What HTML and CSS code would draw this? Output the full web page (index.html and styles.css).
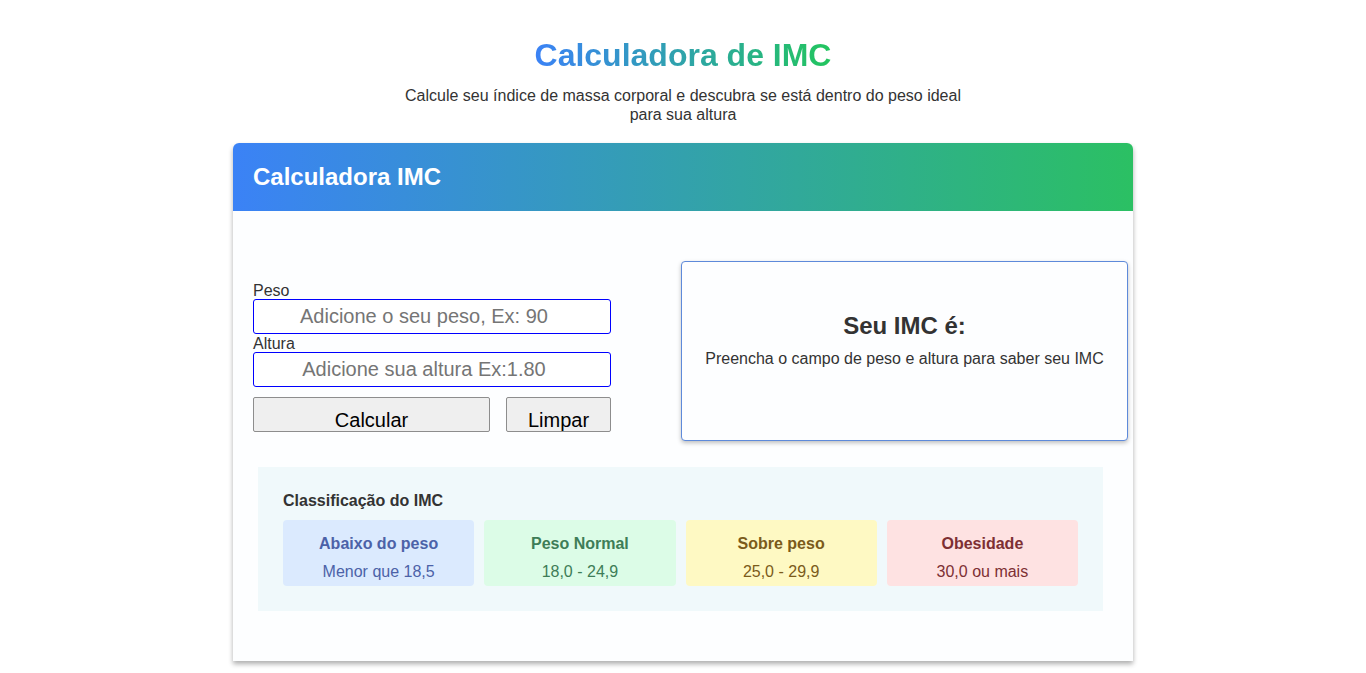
FILE: index.html
```html
<!DOCTYPE html>
<html lang="pt-BR">
<head>
<meta charset="utf-8">
<title>Calculadora de IMC</title>
<link rel="stylesheet" href="styles.css">
</head>
<body>
  <header class="page-head">
    <h1 class="page-title">Calculadora de IMC</h1>
    <p class="page-sub">Calcule seu índice de massa corporal e descubra se está dentro do peso ideal para sua altura</p>
  </header>
  <main class="card">
    <div class="card-head">
      <h2 class="card-title">Calculadora IMC</h2>
    </div>
    <div class="card-body">
      <div class="row">
        <form class="form">
          <label class="label" for="peso">Peso</label>
          <input class="input" id="peso" type="text" placeholder="Adicione o seu peso, Ex: 90">
          <label class="label" for="altura">Altura</label>
          <input class="input" id="altura" type="text" placeholder="Adicione sua altura Ex:1.80">
          <div class="buttons">
            <button type="button" class="btn btn-calc">Calcular</button>
            <button type="button" class="btn btn-clear">Limpar</button>
          </div>
        </form>
        <section class="result">
          <h3 class="result-title">Seu IMC é:</h3>
          <p class="result-text">Preencha o campo de peso e altura para saber seu IMC</p>
        </section>
      </div>
      <section class="classes">
        <h4 class="classes-title">Classificação do IMC</h4>
        <div class="classes-grid">
          <div class="cls cls-blue"><div class="cls-name">Abaixo do peso</div><div class="cls-range">Menor que 18,5</div></div>
          <div class="cls cls-green"><div class="cls-name">Peso Normal</div><div class="cls-range">18,0 - 24,9</div></div>
          <div class="cls cls-yellow"><div class="cls-name">Sobre peso</div><div class="cls-range">25,0 - 29,9</div></div>
          <div class="cls cls-red"><div class="cls-name">Obesidade</div><div class="cls-range">30,0 ou mais</div></div>
        </div>
      </section>
    </div>
  </main>
</body>
</html>
```

FILE: styles.css
```css
* { box-sizing: border-box; }
html, body { margin: 0; padding: 0; }
body {
  background: #ffffff;
  font-family: "Liberation Sans", Arial, sans-serif;
  color: #333;
  padding-bottom: 12px;
}
.page-head {
  padding-top: 37px;
  text-align: center;
}
.page-title {
  margin: 0;
  font-size: 32px;
  font-weight: 700;
  line-height: 37px;
  display: inline-block;
  background: linear-gradient(90deg, #3b82f6, #22c55e);
  -webkit-background-clip: text;
  background-clip: text;
  color: transparent;
}
.page-sub {
  margin: 13px auto 0;
  max-width: 580px;
  font-size: 16px;
  line-height: 18.5px;
  color: #333;
}
.card {
  width: 900px;
  margin: 19px auto 0;
  background: #fdfeff;
  border-radius: 6px 6px 0 0;
  box-shadow: 0 3px 5px rgba(0, 0, 0, 0.32);
}
.card-head {
  background: linear-gradient(90deg, #3b82f6, #2bc063);
  border-radius: 6px 6px 0 0;
  padding: 20px;
}
.card-title {
  margin: 0;
  color: #fff;
  font-size: 24px;
  font-weight: 700;
  line-height: 28px;
}
.card-body {
  padding: 50px 5px 50px 20px;
}
.row {
  display: flex;
  justify-content: space-between;
  align-items: flex-start;
}
.form {
  width: 358px;
  margin-top: 19.6px;
  display: flex;
  flex-direction: column;
}
.label {
  font-size: 16px;
  line-height: 18.4px;
  color: #333;
  padding-top: 1px;
  margin-bottom: -1px;
}
.input {
  width: 358px;
  height: 35px;
  border: 1px solid #0000ff;
  border-radius: 3px;
  font-family: "Liberation Sans", Arial, sans-serif;
  font-size: 20px;
  text-align: center;
  padding: 0 18px 0 2px;
  background: #fff;
}
.input::placeholder { color: #757575; }
.buttons {
  display: flex;
  gap: 16px;
  margin-top: 10px;
}
.btn {
  height: 35px;
  padding: 11px 0 0;
  line-height: 22px;
  font-family: "Liberation Sans", Arial, sans-serif;
  font-size: 20px;
  color: #000;
  background: #efefef;
  border: 1px solid #8d8d8d;
  border-radius: 2px;
}
.btn-calc { width: 237px; }
.btn-clear { width: 105px; }
.result {
  width: 447px;
  height: 180px;
  border: 1px solid #5e8ada;
  border-radius: 4px;
  box-shadow: 0 2px 4px rgba(0, 0, 0, 0.25);
  background: #fdfeff;
  display: flex;
  flex-direction: column;
  justify-content: center;
  align-items: center;
  padding-bottom: 22px;
}
.result-title {
  margin: 0;
  font-size: 24px;
  font-weight: 700;
  line-height: 28px;
  color: #333;
}
.result-text {
  margin: 10px 0 0;
  font-size: 16px;
  line-height: 18px;
  color: #333;
}
.classes {
  margin: 26px 25px 0 5px;
  background: #f0f9fb;
  padding: 25px 25px 25px;
}
.classes-title {
  margin: 0;
  font-size: 16px;
  font-weight: 700;
  line-height: 18px;
  color: #333;
}
.classes-grid {
  margin-top: 10px;
  display: grid;
  grid-template-columns: repeat(4, 1fr);
  gap: 10px;
}
.cls {
  height: 66px;
  border-radius: 4px;
  text-align: center;
  padding-top: 15px;
  font-size: 16px;
}
.cls-name { font-weight: 700; line-height: 18px; }
.cls-range { line-height: 18px; margin-top: 10px; }
.cls-blue { background: #dbeafe; color: #4c62a8; }
.cls-green { background: #dcfce7; color: #3e7d57; }
.cls-yellow { background: #fef9c3; color: #7b5b1a; }
.cls-red { background: #fee2e2; color: #7d2f33; }
```
